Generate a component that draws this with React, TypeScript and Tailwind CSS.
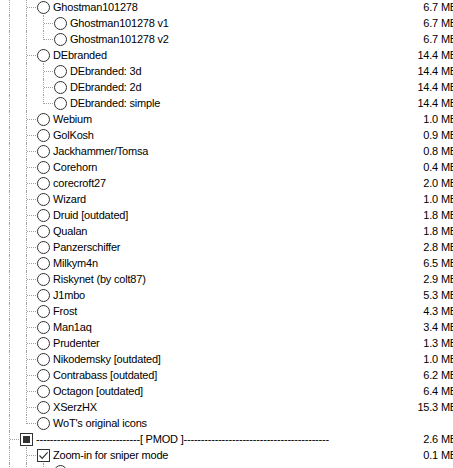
import type { ReactNode } from "react";

type Mark = "radio" | "check" | "mixed";

type Node = {
  depth: number;
  mark: Mark;
  label: string;
  size?: string;
  last?: boolean;
  checked?: boolean;
};

const DASHES_L = "-".repeat(30);
const DASHES_R = "-".repeat(42);

const ROWS: Node[] = [
  { depth: 2, mark: "radio", label: "Ghostman101278", size: "6.7 MB" },
  { depth: 3, mark: "radio", label: "Ghostman101278 v1", size: "6.7 MB" },
  { depth: 3, mark: "radio", label: "Ghostman101278 v2", size: "6.7 MB", last: true },
  { depth: 2, mark: "radio", label: "DEbranded", size: "14.4 MB" },
  { depth: 3, mark: "radio", label: "DEbranded: 3d", size: "14.4 MB" },
  { depth: 3, mark: "radio", label: "DEbranded: 2d", size: "14.4 MB" },
  { depth: 3, mark: "radio", label: "DEbranded: simple", size: "14.4 MB", last: true },
  { depth: 2, mark: "radio", label: "Webium", size: "1.0 MB" },
  { depth: 2, mark: "radio", label: "GolKosh", size: "0.9 MB" },
  { depth: 2, mark: "radio", label: "Jackhammer/Tomsa", size: "0.8 MB" },
  { depth: 2, mark: "radio", label: "Corehorn", size: "0.4 MB" },
  { depth: 2, mark: "radio", label: "corecroft27", size: "2.0 MB" },
  { depth: 2, mark: "radio", label: "Wizard", size: "1.0 MB" },
  { depth: 2, mark: "radio", label: "Druid [outdated]", size: "1.8 MB" },
  { depth: 2, mark: "radio", label: "Qualan", size: "1.8 MB" },
  { depth: 2, mark: "radio", label: "Panzerschiffer", size: "2.8 MB" },
  { depth: 2, mark: "radio", label: "Milkym4n", size: "6.5 MB" },
  { depth: 2, mark: "radio", label: "Riskynet (by colt87)", size: "2.9 MB" },
  { depth: 2, mark: "radio", label: "J1mbo", size: "5.3 MB" },
  { depth: 2, mark: "radio", label: "Frost", size: "4.3 MB" },
  { depth: 2, mark: "radio", label: "Man1aq", size: "3.4 MB" },
  { depth: 2, mark: "radio", label: "Prudenter", size: "1.3 MB" },
  { depth: 2, mark: "radio", label: "Nikodemsky [outdated]", size: "1.0 MB" },
  { depth: 2, mark: "radio", label: "Contrabass [outdated]", size: "6.2 MB" },
  { depth: 2, mark: "radio", label: "Octagon [outdated]", size: "6.4 MB" },
  { depth: 2, mark: "radio", label: "XSerzHX", size: "15.3 MB" },
  { depth: 2, mark: "radio", label: "WoT's original icons", last: true },
  { depth: 1, mark: "mixed", label: `${DASHES_L}[ PMOD ]${DASHES_R}`, size: "2.6 MB" },
  { depth: 2, mark: "check", label: "Zoom-in for sniper mode", size: "0.1 MB", checked: true },
  { depth: 3, mark: "radio", label: "" },
];

const dot = "border-dotted border-[#a0a0a0]";

function Box({ mark, checked }: { mark: Mark; checked?: boolean }) {
  if (mark === "radio") {
    return <span className="h-[13px] w-[13px] shrink-0 rounded-full border border-[#333] bg-white" />;
  }
  return (
    <span className="flex h-[13px] w-[13px] shrink-0 items-center justify-center border border-[#333] bg-white">
      {mark === "mixed" && <span className="h-[7px] w-[7px] bg-[#333]" />}
      {mark === "check" && checked && (
        <svg width="11" height="11" viewBox="0 0 11 11">
          <path d="M1.5 5.5 L4.2 8.3 L9.6 2.4" fill="none" stroke="#333" strokeWidth="1.2" />
        </svg>
      )}
    </span>
  );
}

// guide m sits under the ancestor at depth m and joins its children (depth m + 1);
// it keeps running while a later sibling follows. The list goes on past the bottom.
function guides(rows: Node[], i: number): boolean[] {
  const out: boolean[] = [];
  for (let m = 0; m < rows[i].depth - 1; m++) {
    let runs = true;
    for (let j = i + 1; j < rows.length; j++) {
      if (rows[j].depth === m + 1) break;
      if (rows[j].depth <= m) {
        runs = false;
        break;
      }
    }
    out.push(runs);
  }
  return out;
}

function Row({ node, lines }: { node: Node; lines: boolean[] }) {
  const cells: ReactNode[] = lines.map((on, k) => (
    <span key={k} className="relative h-full w-[17px] shrink-0">
      {on && <span className={`absolute left-0 top-0 h-full border-l ${dot}`} />}
    </span>
  ));

  return (
    <div className="flex h-4 items-center pl-[9px]">
      {cells}
      <span className="relative h-full w-[11px] shrink-0">
        <span className={`absolute left-0 top-0 border-l ${dot} ${node.last ? "h-[9px]" : "h-full"}`} />
        <span className={`absolute left-[1px] top-[8px] w-[9px] border-t ${dot}`} />
      </span>
      <Box mark={node.mark} checked={node.checked} />
      <span className="ml-[3px] whitespace-nowrap">{node.label}</span>
      <span className="ml-auto whitespace-nowrap">{node.size}</span>
    </div>
  );
}

export default function App() {
  return (
    <div className="h-[468px] w-[453px] overflow-hidden bg-white font-['Liberation_Sans',Arial,sans-serif] text-[11px] leading-4 tracking-[-0.2px] text-black">
      <div className="mt-[-1px] w-[457px]">
        {ROWS.map((node, i) => (
          <Row key={i} node={node} lines={guides(ROWS, i)} />
        ))}
      </div>
    </div>
  );
}
